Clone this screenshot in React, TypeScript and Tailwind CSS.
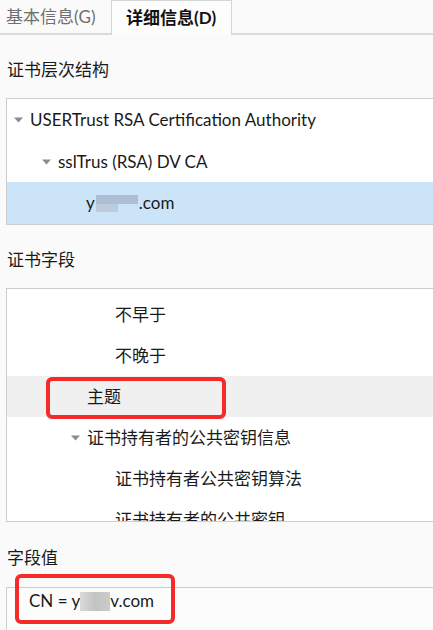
import React from "react";

type Row = {
  label: React.ReactNode;
  pad: string;
  caret?: boolean;
  tone?: "selected" | "hover";
  mark?: boolean;
};

function Caret() {
  return (
    <svg width="9" height="6" viewBox="0 0 9 6" className="shrink-0">
      <polygon points="0,0.5 9,0.5 4.5,5.5" fill="#8c8c8c" />
    </svg>
  );
}

function TreeRow({ row, height }: { row: Row; height: string }) {
  const bg =
    row.tone === "selected"
      ? "bg-[#cce4f7]"
      : row.tone === "hover"
        ? "bg-[#f0f0f0]"
        : "";
  return (
    <div className={`relative flex items-center ${height} ${row.pad} ${bg}`}>
      <span className="w-[16px] shrink-0 flex items-center">
        {row.caret && <Caret />}
      </span>
      <span className="whitespace-nowrap text-[#1a1a1a]">{row.label}</span>
      {row.mark && (
        <span className="absolute left-[39px] top-[1px] w-[180px] h-[42px] border-4 border-[#f52a2a] rounded-[6px]" />
      )}
    </div>
  );
}

function SectionLabel({ text, h }: { text: string; h: string }) {
  return (
    <div className={`${h} flex items-center pt-[6px] pl-[7px] text-[#1a1a1a]`}>
      {text}
    </div>
  );
}

const hierarchy: Row[] = [
  { label: "USERTrust RSA Certification Authority", pad: "pl-[7px]", caret: true },
  { label: "sslTrus (RSA) DV CA", pad: "pl-[35px]", caret: true },
  {
    label: (
      <>
        y
        <span className="inline-flex flex-col align-middle ml-[1px] mr-[1px] -mt-[2px]">
          <span className="block w-[42px] h-[9px] bg-[#aebfd3]" />
          <span className="block w-[22px] h-[8px] bg-[#bdcbdc]" />
        </span>
        .com
      </>
    ),
    pad: "pl-[63px]",
    tone: "selected",
  },
];

const fields: Row[] = [
  { label: "不早于", pad: "pl-[92px]" },
  { label: "不晚于", pad: "pl-[92px]" },
  { label: "主题", pad: "pl-[64px]", tone: "hover", mark: true },
  { label: "证书持有者的公共密钥信息", pad: "pl-[64px]", caret: true },
  { label: "证书持有者公共密钥算法", pad: "pl-[92px]" },
  { label: "证书持有者的公共密钥", pad: "pl-[92px]" },
];

export default function App() {
  return (
    <div
      className="w-[433px] h-[630px] bg-[#fafafa] overflow-hidden flex flex-col text-[17px] leading-[24px]"
      style={{ fontFamily: '"Lato", "Noto Sans CJK SC", sans-serif' }}
    >
      {/* tabs */}
      <div className="flex h-[35px] shrink-0">
        <div className="w-[111px] border-b-2 border-[#dadada] flex items-center pl-[6px] text-[#6e6e6e]">
          基本信息(G)
        </div>
        <div className="w-[121px] bg-[#fdfdfd] border-x border-t border-[#d6d6d6] flex items-center pl-[14px] font-bold text-[#111]">
          详细信息(D)
        </div>
        <div className="flex-1 border-b-2 border-[#dadada]" />
      </div>

      <SectionLabel text="证书层次结构" h="h-[63px]" />
      <div className="ml-[6px] bg-white border-y border-l border-[#cdcdcd] shrink-0">
        {hierarchy.map((r, i) => (
          <TreeRow key={i} row={r} height="h-[41.7px]" />
        ))}
      </div>

      <SectionLabel text="证书字段" h="h-[63px]" />
      <div className="ml-[6px] h-[234px] shrink-0 overflow-hidden bg-white border-y border-l border-[#cdcdcd]">
        <div className="pt-[5px]">
          {fields.map((r, i) => (
            <TreeRow key={i} row={r} height="h-[41px]" />
          ))}
        </div>
      </div>

      <SectionLabel text="字段值" h="h-[65px]" />
      <div className="relative ml-[6px] flex-1 bg-[#fcfcfc] border-t border-l border-[#cdcdcd]">
        <div className="h-[26px] flex items-center pl-[22px] text-[#1a1a1a] whitespace-nowrap">
          CN = y
          <span className="inline-block w-[30px] h-[19px] bg-linear-to-r from-[#dadada] via-[#c3c3c3] to-[#cbcbcb]" />
          v.com
        </div>
        <span className="absolute left-[8px] -top-[14px] w-[160px] h-[50px] border-4 border-[#f52a2a] rounded-[6px]" />
      </div>
    </div>
  );
}
